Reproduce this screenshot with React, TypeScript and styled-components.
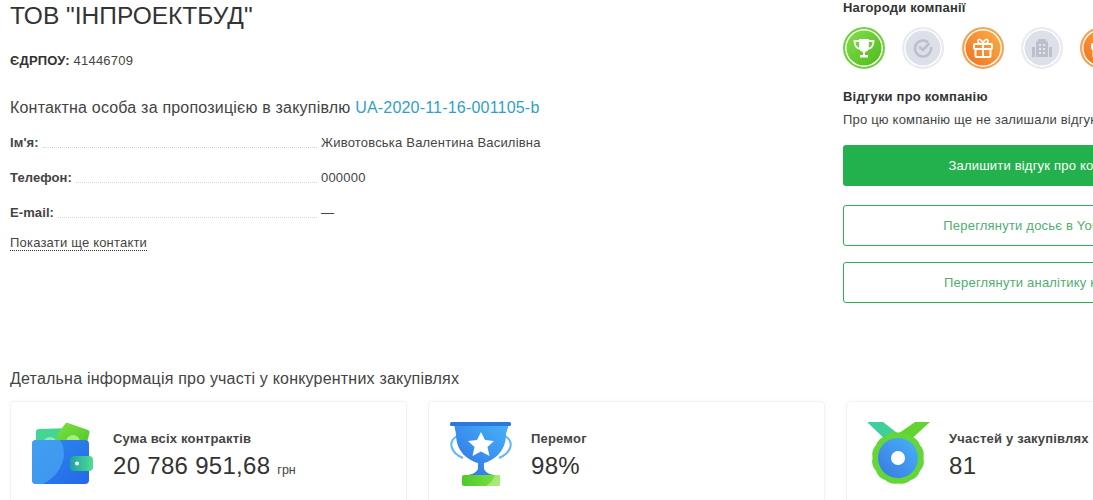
import React from 'react';
import styled, { createGlobalStyle } from 'styled-components';

const GlobalStyle = createGlobalStyle`
	html, body {
		margin: 0;
		padding: 0;
		height: 500px;
		overflow: hidden;
		background: #fff;
		font-family: 'Liberation Sans', Arial, sans-serif;
		color: #333;
	}
`;

const Page = styled.div`
	width: 1260px;
	padding-left: 10px;
`;

const Top = styled.div`
	display: flex;
	height: 368px;
`;

const Company = styled.div`
	width: 833px;
	flex: none;
`;

const Title = styled.h1`
	margin: 1px 0 0;
	font-size: 24.5px;
	line-height: 30px;
	font-weight: 400;
	color: #333;
`;

const Code = styled.p`
	margin: 22px 0 0;
	font-size: 13px;
	line-height: 16px;
	letter-spacing: 0.2px;
	color: #444;

	b {
		color: #333;
	}
`;

const ContactHeading = styled.h2`
	margin: 28px 0 0;
	font-size: 16px;
	line-height: 22px;
	font-weight: 400;
	letter-spacing: 0.2px;
	color: #444;

	a {
		color: #2f9fc9;
		text-decoration: none;
	}
`;

const Contacts = styled.div`
	width: 531px;
	margin-top: 16px;
	display: flex;
	flex-direction: column;
	gap: 19px;
`;

const Row = styled.div`
	display: flex;
	align-items: flex-end;
	height: 16px;
	font-size: 13px;
	line-height: 16px;
	letter-spacing: 0.2px;
`;

const Label = styled.span`
	font-weight: 700;
	letter-spacing: 0.1px;
	color: #444;
`;

const Leader = styled.span`
	flex: 1;
	margin: 0 4px 3px;
	border-bottom: 1px dotted #d4d4d4;
`;

const Value = styled.span`
	width: 220px;
	flex: none;
	white-space: nowrap;
	color: #444;
`;

const More = styled.a`
	display: inline-block;
	margin-top: 14px;
	font-size: 13px;
	line-height: 15px;
	letter-spacing: 0.2px;
	color: #444;
	border-bottom: 1px dotted #333;
`;

const Side = styled.div`
	width: 400px;
	flex: none;
`;

const SideTitle = styled.h3`
	margin: 0;
	font-size: 13px;
	line-height: 16px;
	font-weight: 700;
	letter-spacing: 0.2px;
	color: #333;
`;

const Badges = styled.div`
	display: flex;
	gap: 17.3px;
	margin-top: 11px;
`;

const Badge = styled.div<{ $tone: 'green' | 'grey' | 'orange' }>`
	width: 42px;
	height: 42px;
	box-sizing: border-box;
	flex: none;
	display: flex;
	align-items: center;
	justify-content: center;
	border-radius: 50%;
	border: 2px solid ${(p) => (p.$tone === 'green' ? '#72d241' : p.$tone === 'orange' ? '#f7a457' : '#e9ebf1')};
	box-shadow: inset 0 0 0 1.5px #fff;
	color: ${(p) => (p.$tone === 'grey' ? '#bcc0cb' : '#fff')};
	background: ${(p) =>
		p.$tone === 'green'
			? 'linear-gradient(135deg, #86e04a, #4cb81e)'
			: p.$tone === 'orange'
				? 'linear-gradient(45deg, #f26f1d, #fbb24a)'
				: '#dde0e8'};
`;

const Reviews = styled(SideTitle)`
	margin-top: 20px;
`;

const ReviewsNote = styled.p`
	margin: 7px 0 0;
	font-size: 13px;
	line-height: 16px;
	letter-spacing: 0.2px;
	color: #444;
	white-space: nowrap;
`;

const Primary = styled.button`
	display: block;
	width: 100%;
	height: 41px;
	margin-top: 17px;
	border: 0;
	border-radius: 3px;
	background: #23b14d;
	color: #fff;
	font: 400 13px 'Liberation Sans', Arial, sans-serif;
	letter-spacing: 0.2px;
`;

const Outline = styled.button<{ $gap: number }>`
	display: block;
	width: 100%;
	height: 41px;
	margin-top: ${(p) => p.$gap}px;
	border: 1px solid #2cae55;
	border-radius: 3px;
	background: #fff;
	color: #4fae70;
	font: 400 13px 'Liberation Sans', Arial, sans-serif;
	letter-spacing: 0.2px;
`;

const DetailsHeading = styled.h2`
	margin: 0;
	font-size: 16px;
	line-height: 22px;
	font-weight: 400;
	letter-spacing: 0.2px;
	color: #444;
`;

const Cards = styled.div`
	display: grid;
	grid-template-columns: repeat(3, 397px);
	gap: 21px;
	margin-top: 11px;
`;

const Card = styled.div`
	height: 130px;
	box-sizing: border-box;
	padding: 20px 21px;
	display: flex;
	gap: 19px;
	border: 1px solid #f1f2f4;
	border-radius: 4px;
	box-shadow: 0 0 6px rgba(0, 0, 0, 0.03);
`;

const CardIcon = styled.svg`
	width: 62px;
	height: 64px;
	flex: none;
`;

const CardBody = styled.div`
	padding-top: 9px;
`;

const CardLabel = styled.div`
	font-size: 13px;
	line-height: 16px;
	font-weight: 700;
	letter-spacing: 0.2px;
	color: #444;
`;

const CardValue = styled.div`
	margin-top: 4px;
	font-size: 24px;
	line-height: 30px;
	letter-spacing: 0.3px;
	color: #333;

	small {
		font-size: 12.5px;
		letter-spacing: 0;
		color: #444;
	}
`;

const WalletIcon = () => (
	<CardIcon viewBox="0 0 62 64">
		<defs>
			<linearGradient id="walletBody" x1="0" y1="0" x2="1" y2="1">
				<stop offset="0" stopColor="#2b8ceb" />
				<stop offset="1" stopColor="#2667ea" />
			</linearGradient>
			<linearGradient id="walletClip" x1="0" y1="0" x2="1" y2="0">
				<stop offset="0" stopColor="#1fa0a4" />
				<stop offset="1" stopColor="#50dd92" />
			</linearGradient>
			<linearGradient id="walletNote" x1="0" y1="0" x2="1" y2="1">
				<stop offset="0" stopColor="#7fe33f" />
				<stop offset="1" stopColor="#4cc62d" />
			</linearGradient>
		</defs>
		<path d="M4 10 Q4 7 7 7 L40 6 V22 H4 Z" fill="#43d592" />
		<circle cx="18" cy="22" r="7" fill="#8fe9bd" />
		<path d="M27 10 L33 2 Q34 0 36 1 L56 8 Q58 9 57.5 11 L54 24 H22 Z" fill="url(#walletNote)" />
		<circle cx="41" cy="20" r="7" fill="#a6ec7e" />
		<rect x="0" y="18" width="57" height="44" rx="4" fill="url(#walletBody)" />
		<path d="M4 18 H28 C36 30 32 51 11 62 H4 Q0 62 0 58 V22 Q0 18 4 18 Z" fill="#4aa6f2" opacity="0.7" />
		<rect x="38" y="34" width="23" height="15" rx="4" fill="url(#walletClip)" />
		<circle cx="45" cy="41.5" r="2" fill="#fff" />
	</CardIcon>
);

const CupIcon = () => (
	<CardIcon viewBox="0 0 62 64">
		<defs>
			<linearGradient id="cupBody" x1="1" y1="0" x2="0" y2="1">
				<stop offset="0" stopColor="#46b4f8" />
				<stop offset="1" stopColor="#2f6fe6" />
			</linearGradient>
			<linearGradient id="cupFoot" x1="0" y1="0" x2="1" y2="0">
				<stop offset="0" stopColor="#4fc92c" />
				<stop offset="1" stopColor="#7fe33f" />
			</linearGradient>
		</defs>
		<path d="M7 14 C-3 20 1 31 13 36 M55 14 C65 20 61 31 49 36" fill="none" stroke="#62b6f4" strokeWidth="2" />
		<path d="M4 2 H59 L56 12 C56 30 44 38 34 41 V46 C34 49 38 52 44 53 H18 C24 52 28 49 28 46 V41 C18 38 6 30 6 12 Z" fill="url(#cupBody)" />
		<rect x="0" y="0" width="61" height="4" rx="1.5" fill="#2d78dc" />
		<path d="M31 10 L35 18 L44 19 L37.5 25 L39.5 34 L31 29.5 L22.5 34 L24.5 25 L18 19 L27 18 Z" fill="#fff" />
		<path d="M12 55 Q12 53 14 53 H48 Q50 53 50 55 V62 Q50 64 48 64 H14 Q12 64 12 62 Z" fill="url(#cupFoot)" />
		<path d="M36 64 C42 60 44 57 45 53 H48 Q50 53 50 55 V62 Q50 64 48 64 Z" fill="#a7e878" />
	</CardIcon>
);

// зубчатый край медали
const medalEdge = Array.from({ length: 24 }, (_, i) => {
	const a = (i / 24) * Math.PI * 2;
	const r = i % 2 === 0 ? 25.5 : 28;
	return `${30 + r * Math.cos(a)} ${36 + r * Math.sin(a)}`;
});

const medalPath = medalEdge.reduce((d, point, i) => {
	if (i % 2 === 1) return `${d} Q${point}`;
	return i === 0 ? `M${point}` : `${d} ${point}`;
}, '') + ` ${medalEdge[0]} Z`;

const MedalIcon = () => (
	<CardIcon viewBox="0 0 62 64">
		<defs>
			<linearGradient id="medalFace" x1="1" y1="0" x2="0" y2="1">
				<stop offset="0" stopColor="#46b4f8" />
				<stop offset="1" stopColor="#3a78e0" />
			</linearGradient>
		</defs>
		<path d="M-1 0 H15 L33 14 L22 22 Z" fill="#3fcf9a" />
		<path d="M62 0 H47 L27 14 L38 22 Z" fill="#62d32f" />
		<path d={medalPath} fill="#63d63a" />
		<circle cx="30" cy="36" r="20" fill="url(#medalFace)" />
		<circle cx="30" cy="36" r="7" fill="#fff" />
	</CardIcon>
);

const TrophyGlyph = () => (
	<svg width="24" height="24" viewBox="0 0 24 24">
		<path d="M7 3 H17 V11 C17 14 14.5 16 12 16 C9.5 16 7 14 7 11 Z" fill="currentColor" />
		<path d="M7 5 H2.5 C2.5 9 4 12 8 13 M17 5 H21.5 C21.5 9 20 12 16 13" fill="none" stroke="currentColor" strokeWidth="1.8" />
		<path d="M11 15 H13 V19 H11 Z M8 19 H16 V21.5 H8 Z" fill="currentColor" />
	</svg>
);

const ClockGlyph = () => (
	<svg width="20" height="20" viewBox="0 0 20 20" fill="none" stroke="currentColor" strokeWidth="2.6" strokeLinecap="round">
		<path d="M14 3.6 A8 8 0 1 0 18 10" />
		<path d="M7 9.5 L10 12 L15.5 6" />
	</svg>
);

const GiftGlyph = () => (
	<svg width="24" height="24" viewBox="0 0 24 24" fill="none" stroke="currentColor" strokeWidth="2">
		<rect x="3" y="8" width="18" height="5" rx="1" />
		<rect x="4.5" y="13" width="15" height="8" rx="1" />
		<path d="M12 8 V21" />
		<path d="M12 8 C8 8 6.5 6.5 7 4.5 C8 2.5 11 3.5 12 8 C13 3.5 16 2.5 17 4.5 C17.5 6.5 16 8 12 8 Z" strokeWidth="1.6" />
	</svg>
);

const BuildingGlyph = () => (
	<svg width="24" height="24" viewBox="0 0 24 24" fill="currentColor">
		<path d="M8 3 H16 V5.5 H18 V21 H6 V5.5 H8 Z" />
		<path d="M2 11 H5 V21 H2 Z M19 11 H22 V21 H19 Z" />
		<path d="M9 8 H11 V10 H9 Z M13 8 H15 V10 H13 Z M9 12 H11 V14 H9 Z M13 12 H15 V14 H13 Z M9 16 H11 V18 H9 Z M13 16 H15 V18 H13 Z" fill="#e6e8ee" />
	</svg>
);

const App = () => (
	<Page>
		<GlobalStyle />
		<Top>
			<Company>
				<Title>ТОВ "ІНПРОЕКТБУД"</Title>
				<Code>
					<b>ЄДРПОУ:</b> 41446709
				</Code>
				<ContactHeading>
					Контактна особа за пропозицією в закупівлю <a>UA-2020-11-16-001105-b</a>
				</ContactHeading>
				<Contacts>
					<Row>
						<Label>Ім'я:</Label>
						<Leader />
						<Value>Животовська Валентина Василівна</Value>
					</Row>
					<Row>
						<Label>Телефон:</Label>
						<Leader />
						<Value>000000</Value>
					</Row>
					<Row>
						<Label>E-mail:</Label>
						<Leader />
						<Value>—</Value>
					</Row>
				</Contacts>
				<More>Показати ще контакти</More>
			</Company>
			<Side>
				<SideTitle>Нагороди компанії</SideTitle>
				<Badges>
					<Badge $tone="green">
						<TrophyGlyph />
					</Badge>
					<Badge $tone="grey">
						<ClockGlyph />
					</Badge>
					<Badge $tone="orange">
						<GiftGlyph />
					</Badge>
					<Badge $tone="grey">
						<BuildingGlyph />
					</Badge>
					<Badge $tone="orange">
						<GiftGlyph />
					</Badge>
				</Badges>
				<Reviews>Відгуки про компанію</Reviews>
				<ReviewsNote>Про цю компанію ще не залишали відгуків</ReviewsNote>
				<Primary>Залишити відгук про компанію</Primary>
				<Outline $gap={19}>Переглянути досьє в YouControl</Outline>
				<Outline $gap={16}>Переглянути аналітику компанії</Outline>
			</Side>
		</Top>
		<DetailsHeading>Детальна інформація про участі у конкурентних закупівлях</DetailsHeading>
		<Cards>
			<Card>
				<WalletIcon />
				<CardBody>
					<CardLabel>Сума всіх контрактів</CardLabel>
					<CardValue>
						20 786 951,68 <small>грн</small>
					</CardValue>
				</CardBody>
			</Card>
			<Card>
				<CupIcon />
				<CardBody>
					<CardLabel>Перемог</CardLabel>
					<CardValue>98%</CardValue>
				</CardBody>
			</Card>
			<Card>
				<MedalIcon />
				<CardBody>
					<CardLabel>Участей у закупівлях</CardLabel>
					<CardValue>81</CardValue>
				</CardBody>
			</Card>
		</Cards>
	</Page>
);

export default App;
